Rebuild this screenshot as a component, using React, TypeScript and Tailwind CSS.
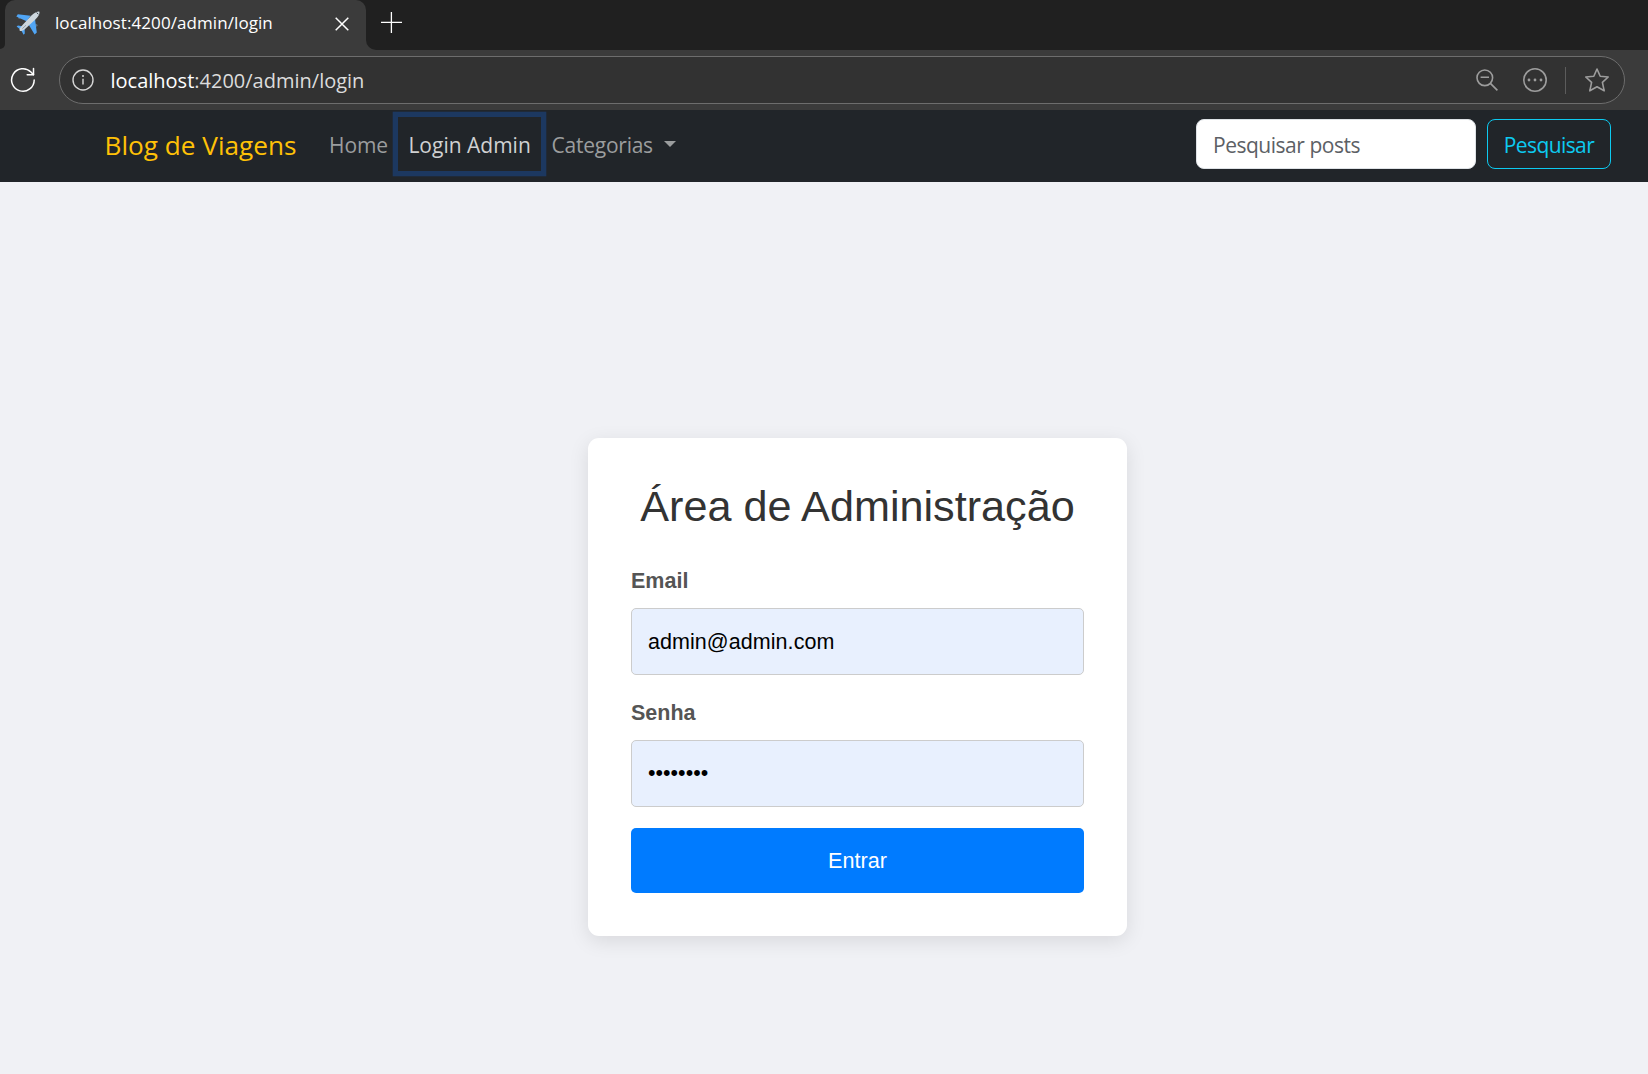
import React from 'react';

function PlaneIcon() {
  return (
    <svg viewBox="0 0 24 24" className="size-6 shrink-0">
      <circle cx="3.4" cy="6.6" r="1.3" fill="#5d6b78" />
      <circle cx="20" cy="14.2" r="1.5" fill="#5d6b78" />
      <path d="M0.3 5.4 1.8 3.2 14.6 4.8 10.6 10.2 5.6 8Z" fill="#50a5f5" />
      <path d="M20.8 21.6 18.6 23.4 14.4 16.6 12.4 13.6 19 8Z" fill="#50a5f5" />
      <path d="M0.6 15.6 2 14.6 7.6 15.4 8.6 16.8 8.8 22.6 7.6 23.8 5 19Z" fill="#50a5f5" />
      <path d="M3.6 19.4C3 17.4 5 15.6 7 13.4L15.4 4.6C18.4 1.4 21.4 0.2 23.2 0.4 24.2 2.2 22.6 5.2 19.6 8.2L9.6 17.4C7.4 19.4 5.2 20.8 3.6 19.4Z" fill="#ccd6dd" />
      <path d="M20.6 1.6 22.4 3.2" stroke="#39424a" strokeWidth="1" />
      <path d="M6.4 17.6 10 14.2" stroke="#7c8a96" strokeWidth="0.7" />
    </svg>
  );
}

function ReloadIcon() {
  return (
    <svg viewBox="0 0 26 26" className="size-[26px] shrink-0" fill="none" stroke="#ffffff" strokeWidth="1.5" strokeLinecap="round" strokeLinejoin="round">
      <path d="M24.2 13a11.3 11.3 0 1 1-3.3-8l2.6 2.6" />
      <path d="M23.5 1.4v6.4h-6.3" />
    </svg>
  );
}

function BrowserChrome() {
  return (
    <div className="font-['Open_Sans',sans-serif]">
      <div className="flex h-[50px] items-stretch bg-[#3b3b3b]">
        <div className="w-[5px] bg-[#3b3b3b]">
          <div className="h-[49px] rounded-br-[9px] bg-[#202020]" />
        </div>
        <div className="w-[361px] bg-[#202020]">
          <div className="flex h-full items-center rounded-t-[10px] bg-[#3b3b3b] pb-[5px] pl-[11px]">
            <PlaneIcon />
            <span className="ml-[15px] w-[280px] whitespace-nowrap text-[17px] leading-6 tracking-[0.08px] text-white">localhost:4200/admin/login</span>
            <svg viewBox="0 0 14 14" className="mt-[2px] size-[14px] shrink-0" stroke="#ffffff" strokeWidth="1.5">
              <path d="M0.7 0.7 13.3 13.3M13.3 0.7 0.7 13.3" />
            </svg>
          </div>
        </div>
        <div className="flex-1 rounded-bl-[10px] bg-[#202020] pl-[15px] pt-3">
          <svg viewBox="0 0 21 21" className="size-[21px]" stroke="#ffffff" strokeWidth="1.3">
            <path d="M10.4 0v21M0 10.4h21" />
          </svg>
        </div>
      </div>

      <div className="flex h-[60px] items-center bg-[#3b3b3b] pl-[10px] pr-[23px]">
        <ReloadIcon />
        <div className="ml-[23px] flex h-12 flex-1 items-center rounded-full border-[1.5px] border-[#6d6d6d] bg-[#323232] pl-[12px] pr-[15px]">
          <svg viewBox="0 0 22 22" className="size-[22px] shrink-0" fill="none" stroke="#d6d6d6" strokeWidth="1.4">
            <circle cx="11" cy="11" r="10" />
            <path d="M11 9.8v5.6" />
            <circle cx="11" cy="7" r="1" fill="#d6d6d6" stroke="none" />
          </svg>
          <span className="ml-[16.5px] flex-1 whitespace-nowrap pt-[2px] text-[20px] leading-7 text-[#dcdcdc]">
            <span className="text-white">localhost</span>:4200/admin/login
          </span>
          <svg viewBox="0 0 22 22" className="mr-[25px] size-[22px] shrink-0" fill="none" stroke="#9d9d9d" strokeWidth="1.6">
            <circle cx="8.8" cy="8.8" r="7.8" />
            <path d="M4.6 8.3h8.4M14.4 14.4l7 7" />
          </svg>
          <svg viewBox="0 0 24 24" className="mr-[18px] size-6 shrink-0" fill="none" stroke="#9d9d9d" strokeWidth="1.6">
            <circle cx="12" cy="12" r="11.2" />
            <g fill="#9d9d9d" stroke="none">
              <circle cx="6" cy="12" r="1.4" />
              <circle cx="12" cy="12" r="1.4" />
              <circle cx="18" cy="12" r="1.4" />
            </g>
          </svg>
          <div className="mr-[19px] h-[27px] w-px bg-[#5c5c5c]" />
          <svg viewBox="0 0 24 24" className="size-6 shrink-0" fill="none" stroke="#9d9d9d" strokeWidth="1.6" strokeLinejoin="round">
            <path d="M12 1 15.2 8.2 23.2 9 17.4 14.4 19.2 22.8 12 18.8 4.8 22.8 6.6 14.4 0.8 9 8.8 8.2Z" />
          </svg>
        </div>
      </div>
    </div>
  );
}

function Navbar() {
  return (
    <nav className="flex h-[72px] items-center bg-[#212529] pb-[4px] pl-[104.5px] pr-[37px] font-['Open_Sans',sans-serif] text-[21px] text-[#9b9d9e]">
      <a className="w-[224.5px] whitespace-nowrap pt-[2px] text-[26.2px] leading-9 text-[#ffc107]">Blog de Viagens</a>
      <a className="w-[69px] whitespace-nowrap pt-[2px] leading-8 tracking-[-0.1px]">Home</a>
      <a className="flex h-[54px] w-[143px] items-center whitespace-nowrap pl-[10.4px] pt-[2px] leading-8 text-[#d0d1d2] ring-[5.3px] ring-[#1c3860]">Login Admin</a>
      <a className="flex items-center whitespace-nowrap pl-[10.6px] pt-[2px] leading-8 tracking-[-0.25px]">
        Categorias
        <span className="-mt-[3px] ml-[11px] border-x-[6.4px] border-t-[6.4px] border-x-transparent border-t-[#9b9d9e]" />
      </a>
      <form className="ml-auto flex gap-[11px]">
        <input
          placeholder="Pesquisar posts"
          className="h-[50px] w-[280px] rounded-[8px] border border-[#dee2e6] bg-white pl-[16px] pt-[2px] tracking-[-0.48px] text-[#212529] outline-none placeholder:text-[#5c6065] placeholder:opacity-100"
        />
        <button type="button" className="h-[50px] w-[124px] rounded-[8px] border border-[#0dcaf0] pt-[3px] tracking-[-0.6px] text-[#0dcaf0]">Pesquisar</button>
      </form>
    </nav>
  );
}

function Field({ label, type, value }: { label: string; type: string; value: string }) {
  return (
    <div className="mb-[21px]">
      <label className="mb-[11px] block pt-px text-[21.5px] font-bold leading-8 text-[#555555]">{label}</label>
      <input
        type={type}
        defaultValue={value}
        className={`block h-[67px] w-full rounded-[5px] border border-[#cccccc] bg-[#e8f0fe] px-4 text-[21.5px] text-black outline-none ${type === 'email' ? 'pt-[2px] tracking-[0.06px]' : ''}`}
      />
    </div>
  );
}

export default function App() {
  return (
    <div className="flex h-[1074px] w-[1648px] flex-col overflow-hidden bg-[#f0f1f5]">
      <BrowserChrome />
      <Navbar />
      <main className="flex flex-1 justify-center pl-[67px] pt-[256px]">
        <section className="h-[498px] w-[539px] rounded-[11px] bg-white px-[43px] pt-[42px] font-['Liberation_Sans',Arial,sans-serif] shadow-[0_5px_20px_rgba(0,0,0,0.1)]">
          <h2 className="mb-8 whitespace-nowrap text-center text-[43.2px] leading-[52px] text-[#333333]">Área de Administração</h2>
          <Field label="Email" type="email" value="admin@admin.com" />
          <Field label="Senha" type="password" value="12345678" />
          <button type="button" className="block h-[65px] w-full rounded-[5px] bg-[#007bff] pt-[2px] text-[21.6px] text-white">Entrar</button>
        </section>
      </main>
    </div>
  );
}
